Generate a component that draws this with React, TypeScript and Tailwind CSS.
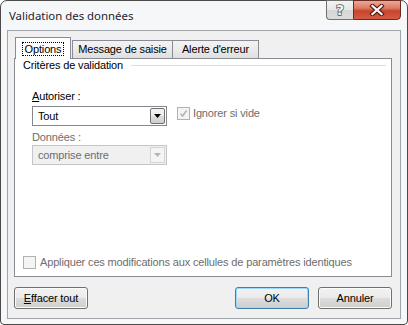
const ui = "font-['Liberation_Sans',Arial,sans-serif] tracking-[-0.15px]";

function CheckBox({ checked }: { checked?: boolean }) {
  return (
    <span className="w-[13px] h-[13px] shrink-0 border border-[#b1b1b1] bg-[#f4f4f4] flex items-center justify-center">
      {checked && (
        <svg width="9" height="9" viewBox="0 0 9 9">
          <path d="M1.5 4.8 L3.6 7 L7.6 1.6" stroke="#b4b4b4" strokeWidth="1.6" fill="none" />
        </svg>
      )}
    </span>
  );
}

function Arrow({ color }: { color: string }) {
  return (
    <svg width="7" height="4" viewBox="0 0 7 4">
      <path d="M0 0 H7 L3.5 4 Z" fill={color} />
    </svg>
  );
}

function Button({ children, primary }: { children: React.ReactNode; primary?: boolean }) {
  return (
    <button
      className={
        "w-[74px] h-[22px] rounded-[3px] border text-[11px] leading-[13px] text-black bg-[linear-gradient(180deg,#f2f2f2_0%,#ebebeb_50%,#dddddd_50%,#cfcfcf_100%)] " +
        (primary
          ? "border-[#3c7fb1] shadow-[inset_0_0_0_1px_#9fd9f7]"
          : "border-[#707070] shadow-[inset_0_0_0_1px_#fbfbfb]")
      }
    >
      {children}
    </button>
  );
}

export default function App() {
  return (
    <div className={"w-[408px] h-[325px] bg-white " + ui}>
      <div className="w-full h-full flex flex-col rounded-t-[7px] rounded-b-[4px] border border-[#4a4a4a] bg-[#f6f7f8]">
        <div className="h-[29px] shrink-0 flex items-start">
          <div className="pl-[8px] pt-[7px] text-[11.4px] leading-[16px] tracking-normal text-[#1b2433] font-['Noto_Sans',sans-serif]">
            Validation des données
          </div>
          <div className="ml-auto mr-[6px] -mt-px flex">
            <div className="w-[27px] h-[20px] border border-r-0 border-[#707070] rounded-bl-[4px] bg-[linear-gradient(180deg,#f3f3f3_0%,#e6e6e6_50%,#d6d6d6_51%,#dcdcdc_100%)] flex items-center justify-center">
              <span className="text-[14px] leading-[14px] font-bold text-[#f4f4f4] font-['DejaVu_Sans',sans-serif] [-webkit-text-stroke:1.5px_#555] [paint-order:stroke_fill]">
                ?
              </span>
            </div>
            <div className="w-[48px] h-[20px] border border-[#6a2a20] rounded-br-[4px] bg-[linear-gradient(180deg,#eaa996_0%,#dc7a64_40%,#c8442b_55%,#d35c44_100%)] flex items-center justify-center">
              <svg width="16" height="12" viewBox="0 0 16 12">
                <path d="M3.5 2 L12.5 10 M12.5 2 L3.5 10" stroke="#5a1c12" strokeWidth="4.4" strokeLinecap="square" fill="none" />
                <path d="M3.5 2 L12.5 10 M12.5 2 L3.5 10" stroke="#ffffff" strokeWidth="2.2" strokeLinecap="square" fill="none" />
              </svg>
            </div>
          </div>
        </div>

        <div className="flex-1 mx-[6px] mb-[5px] border border-[#a0a5ab] bg-[#f0f0f0] pl-[6px] pr-[8px] pt-[6px] flex flex-col text-[11px] leading-[13px] text-black">
          <div className="flex items-end ml-px h-[21px]">
            <div className="relative z-10 w-[56px] h-[22px] -mb-px border border-b-0 border-[#898c95] bg-white flex items-start justify-center pt-[4px]">
              <span className="px-[2px] py-[0px] border border-dotted border-black leading-[12px]">Options</span>
            </div>
            <div className="ml-px w-[101px] h-[18px] border border-b-0 border-[#898c95] bg-[linear-gradient(180deg,#f3f3f3_0%,#ebebeb_50%,#dedede_100%)] flex items-center justify-center">
              Message de saisie
            </div>
            <div className="w-[86px] h-[18px] border border-b-0 border-l-0 border-[#898c95] bg-[linear-gradient(180deg,#f3f3f3_0%,#ebebeb_50%,#dedede_100%)] flex items-center justify-center">
              Alerte d'erreur
            </div>
          </div>

          <div className="h-[219px] shrink-0 border border-[#898c95] bg-white flex flex-col">
            <div className="flex items-center pl-[8px] pr-[5px]">
              <span>Critères de validation</span>
              <div className="flex-1 h-px bg-[#d5dfe5] ml-[8px]" />
            </div>

            <div className="ml-[17px] mt-[18px]">
              <span className="underline underline-offset-[1px]">A</span>utoriser :
            </div>
            <div className="ml-[17px] mt-[3px] flex items-start">
              <div className="w-[135px] h-[20px] border border-[#828790] bg-white flex items-center p-px">
                <span className="flex-1 pl-[4px]">Tout</span>
                <span className="w-[15px] h-[16px] rounded-[2px] border border-[#707070] bg-[linear-gradient(180deg,#f2f2f2_0%,#ebebeb_50%,#dddddd_50%,#cfcfcf_100%)] flex items-center justify-center">
                  <Arrow color="#000000" />
                </span>
              </div>
              <div className="ml-[10px] mt-px flex items-start gap-[3px] text-[#6d6d6d]">
                <CheckBox checked />
                <span>Ignorer si vide</span>
              </div>
            </div>

            <div className="ml-[17px] mt-[5px] text-[#6d6d6d]">Données :</div>
            <div className="ml-[17px] mt-px w-[135px] h-[20px] border border-[#c3c6c9] bg-[#f0f0f0] flex items-center p-px text-[#6d6d6d]">
              <span className="flex-1 pl-[4px]">comprise entre</span>
              <span className="w-[15px] h-[16px] border border-[#d5d5d5] bg-[#f4f4f4] flex items-center justify-center">
                <Arrow color="#b5b5b5" />
              </span>
            </div>

            <div className="mt-auto mb-[7px] ml-[8px] flex items-center gap-[4px] text-[#6d6d6d]">
              <CheckBox />
              <span>Appliquer ces modifications aux cellules de paramètres identiques</span>
            </div>
          </div>

          <div className="mt-[10px] flex">
            <Button>
              <span className="underline underline-offset-[1px]">E</span>ffacer tout
            </Button>
            <div className="ml-auto flex gap-[9px]">
              <Button primary>OK</Button>
              <Button>Annuler</Button>
            </div>
          </div>
        </div>
      </div>
    </div>
  );
}
